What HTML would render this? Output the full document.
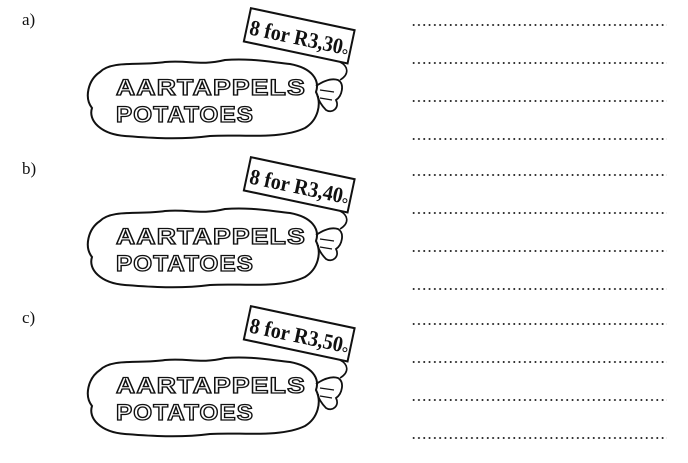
<!DOCTYPE html>
<html><head><meta charset="utf-8"><style>
html,body{margin:0;padding:0;background:#fff;width:688px;height:463px;overflow:hidden}
.lbl{position:absolute;left:22px;font:17px "Liberation Serif",serif;color:#111}
.dl{position:absolute;left:411px;width:256px;height:2px;background-image:radial-gradient(circle,#333 0.9px,transparent 1.1px);background-size:5.3px 2px}
svg{position:absolute;left:0;top:0}
</style></head><body>
<div class="lbl" style="top:10px">a)</div>
<div class="lbl" style="top:159px">b)</div>
<div class="lbl" style="top:308px">c)</div>
<div class="dl" style="top:24px"></div><div class="dl" style="top:62px"></div><div class="dl" style="top:100px"></div><div class="dl" style="top:138px"></div>
<div class="dl" style="top:174px"></div><div class="dl" style="top:212px"></div><div class="dl" style="top:250px"></div><div class="dl" style="top:288px"></div>
<div class="dl" style="top:323px"></div><div class="dl" style="top:361px"></div><div class="dl" style="top:399px"></div><div class="dl" style="top:437px"></div>
<svg width="688" height="463" viewBox="0 0 688 463">
<defs>
<g id="bag">
<path d="M100,72 C112,60 140,66 165,62 C190,60 200,66 225,60 C250,58 270,62 290,64 C312,68 320,80 316,92 C322,104 318,120 305,128 C280,140 240,134 210,136 C180,140 150,138 125,136 C100,134 88,120 92,108 C84,98 88,80 100,72 Z" fill="#fff" stroke="#111" stroke-width="2"/>
<path d="M316,86 C325,80 332,78 338,80 C345,84 342,96 336,100 C340,108 332,114 326,110 C322,106 318,100 318,96" fill="none" stroke="#111" stroke-width="1.8"/>
<path d="M320,90 L334,92 M320,98 L332,100" stroke="#111" stroke-width="1.2"/>
<path d="M340,62 C348,66 350,74 340,80" fill="none" stroke="#111" stroke-width="1.6"/>
<text x="116" y="95" font-family="Liberation Sans,sans-serif" font-weight="bold" font-size="22" fill="#fff" stroke="#111" stroke-width="1.3" letter-spacing="1" textLength="190" lengthAdjust="spacingAndGlyphs">AARTAPPELS</text>
<text x="116" y="122" font-family="Liberation Sans,sans-serif" font-weight="bold" font-size="22" fill="#fff" stroke="#111" stroke-width="1.3" letter-spacing="1" textLength="138" lengthAdjust="spacingAndGlyphs">POTATOES</text>
</g>
</defs>
<g>
<use href="#bag"/>
<g transform="rotate(12 300 37)"><rect x="246" y="19" width="106" height="34" fill="#fff" stroke="#111" stroke-width="2"/>
<text x="249" y="45" font-family="Liberation Serif,serif" font-weight="bold" font-size="22" fill="#111" textLength="95" lengthAdjust="spacingAndGlyphs">8 for R3,30</text><circle cx="347" cy="42" r="2" fill="none" stroke="#111"/></g>
</g>
<g transform="translate(0,149)">
<use href="#bag"/>
<g transform="rotate(12 300 37)"><rect x="246" y="19" width="106" height="34" fill="#fff" stroke="#111" stroke-width="2"/>
<text x="249" y="45" font-family="Liberation Serif,serif" font-weight="bold" font-size="22" fill="#111" textLength="95" lengthAdjust="spacingAndGlyphs">8 for R3,40</text><circle cx="347" cy="42" r="2" fill="none" stroke="#111"/></g>
</g>
<g transform="translate(0,298)">
<use href="#bag"/>
<g transform="rotate(12 300 37)"><rect x="246" y="19" width="106" height="34" fill="#fff" stroke="#111" stroke-width="2"/>
<text x="249" y="45" font-family="Liberation Serif,serif" font-weight="bold" font-size="22" fill="#111" textLength="95" lengthAdjust="spacingAndGlyphs">8 for R3,50</text><circle cx="347" cy="42" r="2" fill="none" stroke="#111"/></g>
</g>
</svg>
</body></html>
